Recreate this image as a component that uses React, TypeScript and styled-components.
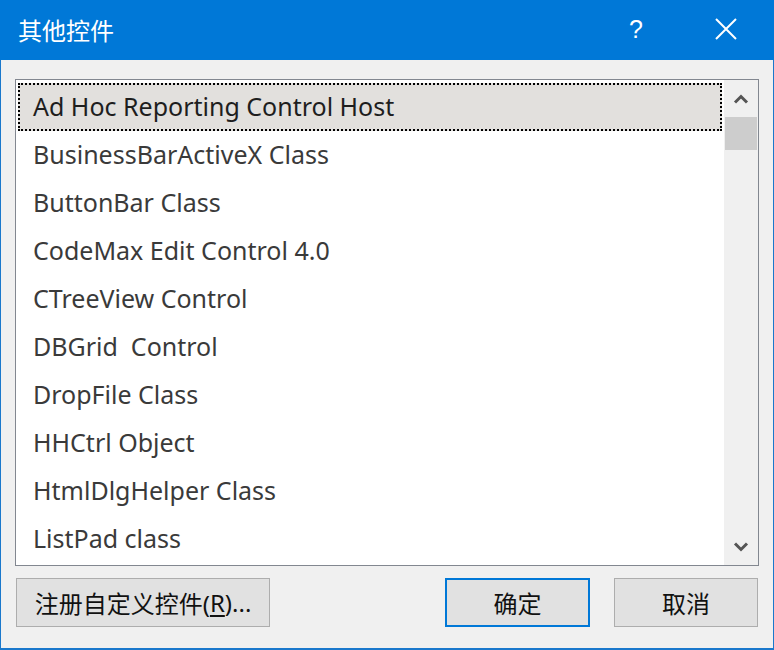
import React from "react"
import styled, { createGlobalStyle } from "styled-components"

const GlobalStyle = createGlobalStyle`
  html, body {
    margin: 0;
    padding: 0;
    background: #ffffff;
  }
  * {
    box-sizing: border-box;
  }
`

const FONT = `"Noto Sans", "Noto Sans CJK SC", sans-serif`

const items = [
  "Ad Hoc Reporting Control Host",
  "BusinessBarActiveX Class",
  "ButtonBar Class",
  "CodeMax Edit Control 4.0",
  "CTreeView Control",
  "DBGrid  Control",
  "DropFile Class",
  "HHCtrl Object",
  "HtmlDlgHelper Class",
  "ListPad class",
]

const Chevron = ({ up }: { up?: boolean }) => (
  <svg width="16" height="10" viewBox="0 0 16 10">
    <path
      d={up ? "M2 8.5 L8 2.5 L14 8.5" : "M2 1.5 L8 7.5 L14 1.5"}
      fill="none"
      stroke="#555555"
      strokeWidth="3"
    />
  </svg>
)

const App = () => {
  return (
    <>
      <GlobalStyle />
      <Window>
        <TitleBar>
          <Title>其他控件</Title>
          <TitleButtons>
            <HelpGlyph>?</HelpGlyph>
            <CloseGlyph>
              <svg width="22" height="22" viewBox="0 0 22 22">
                <path d="M1 1 L21 21 M21 1 L1 21" stroke="#ffffff" strokeWidth="2" />
              </svg>
            </CloseGlyph>
          </TitleButtons>
        </TitleBar>
        <Body>
          <ListBox>
            <ItemList>
              {items.map((name, i) => (
                <Item key={name} $selected={i === 0}>
                  {name}
                </Item>
              ))}
            </ItemList>
            <ScrollBar>
              <ArrowButton>
                <Chevron up />
              </ArrowButton>
              <Thumb />
              <Track />
              <ArrowButton>
                <Chevron />
              </ArrowButton>
            </ScrollBar>
          </ListBox>
          <ButtonRow>
            <DialogButton $width={254}>
              注册自定义控件(<u>R</u>)...
            </DialogButton>
            <Spacer />
            <DialogButton $width={145} $default>
              确定
            </DialogButton>
            <DialogButton $width={144}>取消</DialogButton>
          </ButtonRow>
        </Body>
      </Window>
    </>
  )
}

const Window = styled.div`
  width: 774px;
  height: 650px;
  display: flex;
  flex-direction: column;
  background: #f0f0f0;
  border: 1px solid #1a78cc;
  border-bottom-width: 2px;
  font-family: ${FONT};
`

const TitleBar = styled.div`
  height: 60px;
  flex: none;
  display: flex;
  align-items: center;
  justify-content: space-between;
  background: #0078d7;
  margin: -1px -1px 0;
  padding: 0 0 2px 18px;
`

const Title = styled.div`
  color: #ffffff;
  font-size: 24px;
`

const TitleButtons = styled.div`
  display: flex;
  align-items: center;
  height: 100%;
`

const HelpGlyph = styled.div`
  width: 92px;
  text-align: center;
  color: #ffffff;
  font-family: "Liberation Sans", sans-serif;
  font-size: 25px;
`

const CloseGlyph = styled.div`
  width: 92px;
  padding-right: 4px;
  display: flex;
  align-items: center;
  justify-content: center;
`

const Body = styled.div`
  flex: 1;
  display: flex;
  flex-direction: column;
  padding: 19px 14px 0 14px;
`

const ListBox = styled.div`
  width: 744px;
  height: 487px;
  display: flex;
  background: #ffffff;
  border: 1px solid #828790;
`

const ItemList = styled.div`
  flex: 1;
  padding: 3px 2px 0;
  overflow: hidden;
`

const Item = styled.div<{ $selected?: boolean }>`
  height: 48px;
  display: flex;
  align-items: center;
  padding: 0 0 2px 13px;
  font-size: 25px;
  color: ${(p) => (p.$selected ? "#1e1e1e" : "#3a3a3a")};
  background: ${(p) => (p.$selected ? "#e2e0dd" : "transparent")};
  border: 2px ${(p) => (p.$selected ? "dotted #000000" : "solid transparent")};
  white-space: pre;
`

const ScrollBar = styled.div`
  width: 34px;
  display: flex;
  flex-direction: column;
  background: #f0f0f0;
`

const ArrowButton = styled.div`
  height: 37px;
  display: flex;
  align-items: center;
  justify-content: center;
`

const Thumb = styled.div`
  height: 33px;
  margin: 0 1px;
  background: #cdcdcd;
`

const Track = styled.div`
  flex: 1;
`

const ButtonRow = styled.div`
  display: flex;
  gap: 24px;
  margin-top: 12px;
  padding: 0 1px;
`

const Spacer = styled.div`
  flex: 1;
`

const DialogButton = styled.div<{ $width: number; $default?: boolean }>`
  width: ${(p) => p.$width}px;
  height: 49px;
  display: flex;
  align-items: center;
  justify-content: center;
  background: #e1e1e1;
  border: ${(p) => (p.$default ? "2px solid #0078d7" : "1px solid #adadad")};
  color: #111111;
  font-size: 24px;
  u {
    text-underline-offset: 3px;
  }
`

export default App
